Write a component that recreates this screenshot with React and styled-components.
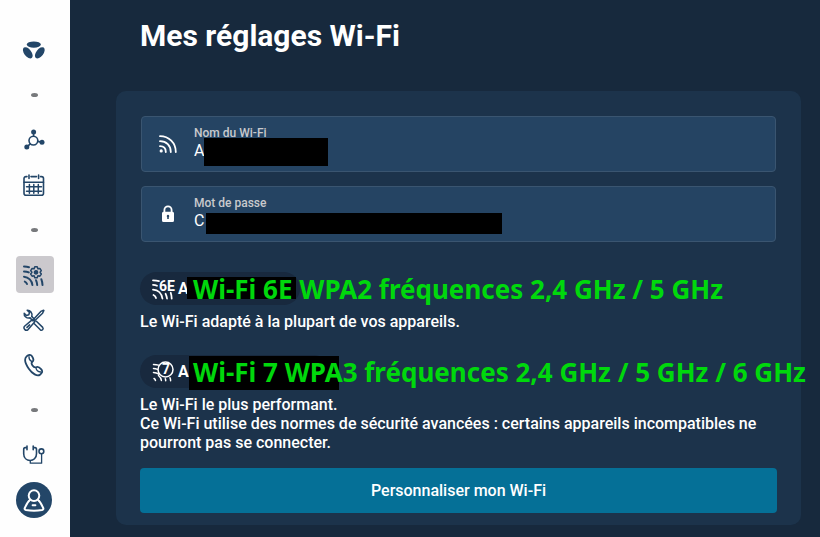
import React, { useState } from 'react';
import styled, { createGlobalStyle } from 'styled-components';

const GlobalStyle = createGlobalStyle`
  * {
    box-sizing: border-box;
  }

  body {
    margin: 0;
    background: #17293d;
    color: #fff;
    font-family: Roboto, 'Liberation Sans', sans-serif;
    font-size: 16px;
    line-height: 19px;
  }
`;

// Styled components
const Page = styled.div`
  display: flex;
  min-height: 100vh;
`;

const Sidebar = styled.nav`
  flex: none;
  width: 70px;
  padding: 31px 16px 0;
  background: #fefefe;
`;

const NavList = styled.ul`
  display: flex;
  flex-direction: column;
  gap: 8px;
  margin: 0;
  padding: 0;
  list-style: none;
`;

const NavLink = styled.a`
  display: flex;
  align-items: center;
  justify-content: center;
  height: 37px;
  padding-right: 2px;
  border-radius: 4px;
  background: ${({ $active }) => ($active ? '#cbc9cd' : 'transparent')};
  color: #234668;
`;

const Separator = styled.li`
  display: flex;
  align-items: center;
  justify-content: center;
  height: 37px;
  padding-right: 2px;

  &::before {
    content: '';
    width: 7px;
    height: 4px;
    border-radius: 50%;
    background: #77797c;
  }
`;

const Avatar = styled.span`
  display: flex;
  flex: none;
  align-items: center;
  justify-content: center;
  width: 36px;
  height: 36px;
  border-radius: 50%;
  background: #234668;
  color: #fff;
`;

const Icon = styled.svg`
  display: block;
  flex: none;
  fill: none;
  stroke: currentColor;
  stroke-width: ${({ $weight }) => $weight || 1.6};
  stroke-linecap: round;
  stroke-linejoin: round;
`;

const Main = styled.main`
  flex: 1;
  min-width: 0;
  padding: 18px 19px 12px 46px;
`;

const Title = styled.h1`
  margin: 0 24px 37px;
  font-size: 30px;
  font-weight: 700;
  line-height: 36px;
`;

const Card = styled.section`
  padding: 25px 24px 12px;
  border-radius: 10px;
  background: #1c334b;
`;

const Fields = styled.div`
  display: grid;
  gap: 14px;
  margin: 0 1px 30px;
`;

const Field = styled.div`
  position: relative;
  display: flex;
  align-items: center;
  gap: 17px;
  height: 56px;
  padding: 0 17px;
  border: 1px solid #3a5570;
  border-radius: 4px;
  background: #254463;
`;

const FieldText = styled.div`
  display: flex;
  flex: 1;
  flex-direction: column;
  padding-bottom: 4px;
`;

const Label = styled.label`
  color: #c9cacd;
  font-size: 12px;
  font-weight: 500;
  line-height: 16px;
`;

const Input = styled.input`
  width: 100%;
  height: 18px;
  padding: 0;
  border: 0;
  outline: 0;
  background: transparent;
  color: #fff;
  font: inherit;
`;

const Mask = styled.span`
  position: absolute;
  top: ${({ $top }) => $top}px;
  left: ${({ $left }) => $left}px;
  width: ${({ $width }) => $width}px;
  height: ${({ $height }) => $height}px;
  background: #000;
`;

const Networks = styled.div`
  display: grid;
  gap: 24px;
  margin-bottom: 16px;
`;

const Network = styled.article`
  position: relative;
`;

const Pill = styled.div`
  display: flex;
  align-items: center;
  gap: 2px;
  width: ${({ $width }) => $width}px;
  height: 33px;
  margin-bottom: 7px;
  padding-left: 12px;
  border-radius: 17px;
  background: #18293e;
  font-weight: 700;
`;

const Note = styled.strong`
  position: absolute;
  top: 0;
  left: 53px;
  color: #00d80c;
  font-family: 'Noto Sans', sans-serif;
  font-size: 26px;
  font-weight: 700;
  line-height: 34px;
  white-space: nowrap;
`;

const Description = styled.p`
  margin: 0;
  font-weight: 500;
`;

const Button = styled.button`
  display: block;
  width: 100%;
  height: 45px;
  border: 0;
  border-radius: 4px;
  background: #057097;
  color: #fff;
  font: inherit;
  font-weight: 500;
  cursor: pointer;
`;

// Icons
const LogoIcon = () => (
  <Icon width="24" height="24" viewBox="0 0 24 24" aria-hidden="true">
    <g fill="currentColor" stroke="none">
      <ellipse cx="11.8" cy="6.6" rx="7" ry="3.2" />
      <ellipse cx="5.8" cy="14.8" rx="6.5" ry="3.6" transform="rotate(53 5.8 14.8)" />
      <ellipse cx="17.8" cy="14.8" rx="6.5" ry="3.6" transform="rotate(-53 17.8 14.8)" />
    </g>
  </Icon>
);

const NetworkIcon = () => (
  <Icon width="24" height="24" viewBox="0 0 24 24" aria-hidden="true">
    <circle cx="11.4" cy="12.6" r="4.4" />
    <path d="M11.6 8V4M15.8 13.4l4 .9M8.2 15.8 5 18.8" />
    <g fill="currentColor" stroke="none">
      <circle cx="11.6" cy="4" r="2.5" />
      <circle cx="20" cy="14.3" r="2.5" />
      <circle cx="4.8" cy="19" r="2.5" />
    </g>
  </Icon>
);

const CalendarIcon = () => (
  <Icon width="24" height="24" viewBox="0 0 24 24" aria-hidden="true">
    <path d="M5 3.6H4a2 2 0 0 0-2 2v14.6a2 2 0 0 0 2 2h15.5a2 2 0 0 0 2-2V5.6a2 2 0 0 0-2-2h-1M9 3.6h5.5" />
    <path d="M7 2v3.4M16.6 2v3.4M2 9.2h19.5" />
    <path d="M7.4 11.5v8.8M11.8 11.5v8.800M16.3 11.5v8.8M4.5 13.7h15M4.5 18.2h15" strokeWidth="1.5" />
  </Icon>
);

const WifiGearIcon = () => (
  <Icon $weight={2} width="24" height="24" viewBox="0 0 24 24" aria-hidden="true">
    <path d="M2 3.6q3 0 5 .6M2 8.400q2.800 0 4.800 1M2 13.700c4.600.4 8 4 8.400 8.300M2.800 18.600q1.600.6 2.200 2.400M14 17.200q.9 2 1.200 4.800M19.300 16.200q1 2.600 1.200 5.800" />
    <path
      d="M12.800 3.800h2.400l.7 2 2-.4 1.400 2.200-1.200 1.700 1.200 1.700-1.400 2.200-2-.4-.7 2h-2.400l-.7-2-2 .4-1.400-2.200 1.200-1.700-1.200-1.700 1.400-2.200 2 .4z"
      strokeWidth="1.5"
    />
    <circle cx="14" cy="9.300" r="1.700" strokeWidth="1.3" fill="currentColor" />
  </Icon>
);

const ToolsIcon = () => (
  <Icon $weight={1.5} width="24" height="24" viewBox="0 0 24 24" aria-hidden="true">
    <path d="M9.800 8.500C10.800 5 8.200 2 5.200 2.200l2.300 2.300-.7 2.300-2.300.7L2.200 5.300C1.800 8.300 4.600 10.700 8 9.900" />
    <path d="M9.800 8.500l2.600 2.600M8 9.900l2.700 2.700M14.400 13.200l6.300 6.200c1.300 1.600-.8 3.700-2.400 2.400l-6-6.100" />
    <path d="M11.600 11.300 18.800 3.400l2.800-1.200.3.300-1.300 2.700-7.900 7.500" />
    <path d="M10.400 11.600 2.800 18c-2.200 2.200.8 5.600 3.300 3.600l6.900-8zM5 19.400l2.600-2.500" />
  </Icon>
);

const PhoneIcon = () => (
  <Icon $weight={1.800} width="24" height="24" viewBox="0 0 24 24" aria-hidden="true">
    <path d="M4.600 3.400C6.300 1.900 8.600 1.200 10 3.200c1.500 2.200 2.100 4.200.4 5.500-1.600 1.200-1 2.300.1 3.900 1.200 1.700 2.200 2.300 3.600 1.600 2.100-1 3.600.3 5.200 2.200 1.900 2.300.3 4.100-1.300 5.300-2.700 2-7.700-.9-11.200-6C3.500 11 2.100 5.800 4.600 3.400z" />
    <path d="M7 3.600q-.3 3.200 2.600 4.800M14 14.800q.5 3.600 4.600 4.200" strokeWidth="1.300" />
  </Icon>
);

const StethoscopeIcon = () => (
  <Icon width="24" height="24" viewBox="0 0 24 24" aria-hidden="true">
    <path d="M5 4.600H3.200Q1.700 4.600 1.700 6.500v4.200c0 9 12.800 9 12.800 0V6.500q0-1.900-1.500-1.900h-1.800M5 3v3.800M11.200 3v3.800" />
    <circle cx="19.400" cy="8.300" r="2.400" />
    <path d="M19.600 11v9.200H8.300v-2.600" strokeWidth="1.300" />
  </Icon>
);

const AccountIcon = () => (
  <Icon $weight={2} width="24" height="24" viewBox="0 0 24 24" aria-hidden="true">
    <circle cx="12" cy="7.600" r="5.300" />
    <path d="M8.200 11.800C5.300 14 4.300 16.500 2.800 20q-.7 1.600 1.200 2c5 .9 11 .9 16 0q1.900-.4 1.200-2c-1.500-3.500-2.500-6-5.400-8.200" />
    <path d="M10.600 17.300h2.800" />
  </Icon>
);

const SignalIcon = () => (
  <Icon $weight={1.8} width="18" height="18" viewBox="0 0 18 18" aria-hidden="true">
    <path d="M1 1.200C10 1.200 16.800 8 16.800 17M1 6.200C7.400 6.200 11.800 10.600 11.800 17M1 11.200c3.600 0 5.800 2.200 5.800 5.800" />
    <circle cx="2.200" cy="15.900" r=".7" fill="currentColor" />
  </Icon>
);

const LockIcon = () => (
  <Icon width="18" height="18" viewBox="0 0 18 18" aria-hidden="true">
    <path d="M5.400 8V5a3.600 3.600 0 0 1 7.200 0v3" strokeWidth="1.800" />
    <path fill="currentColor" stroke="none" fillRule="evenodd" d="M4.500 6.800h9a1.500 1.500 0 0 1 1.500 1.500v7.200a1.500 1.500 0 0 1-1.500 1.500h-9A1.500 1.500 0 0 1 3 15.500V8.300a1.500 1.500 0 0 1 1.500-1.500zM9 9.800a1.300 1.300 0 0 0-.8 2.300v1.900h1.600v-1.900A1.300 1.300 0 0 0 9 9.800z" />
  </Icon>
);

const BadgeText = styled.text`
  fill: currentColor;
  stroke: none;
  font-size: 14px;
  font-weight: 700;
`;

const Wifi6Icon = () => (
  <Icon $weight={1.8} width="24" height="24" viewBox="0 0 24 24" aria-hidden="true">
    <path d="M1 3.300q3.500 0 6 .8M1 7.800q2.300 0 4 .9M1 12.600c5.300.3 8.800 4 9.400 8.900M1.500 18q2 .9 2.500 3M13.600 16.800q1.100 2.200 1.400 4.700M18.700 15.800q.9 2.600 1 5.700" />
    <BadgeText x="7" y="14">6E</BadgeText>
  </Icon>
);

const Wifi7Icon = () => (
  <Icon $weight={1.5} width="24" height="24" viewBox="0 0 24 24" aria-hidden="true">
    <circle cx="13.500" cy="9.500" r="7.500" />
    <path d="M1.500 4.500q3 0 5 .6M1.500 8.500q2 0 4 .9M1.500 12.500q3 .2 5.400 1.700M2 18.500q1.200.6 1.500 2M6.500 15.500q2.600 2.200 2.900 5M13.300 18.800q.4 1 .4 1.900M18 17.800q.6 1.500.6 2.900" />
    <BadgeText x="10" y="14">7</BadgeText>
  </Icon>
);

const App = () => {
    const [name, setName] = useState('A');
    const [password, setPassword] = useState('C');

    return (
        <Page>
            <GlobalStyle />
            <Sidebar>
                <NavList>
                    <li><NavLink href="#accueil"><LogoIcon /></NavLink></li>
                    <Separator />
                    <li><NavLink href="#reseau"><NetworkIcon /></NavLink></li>
                    <li><NavLink href="#planning"><CalendarIcon /></NavLink></li>
                    <Separator />
                    <li><NavLink href="#wifi" $active><WifiGearIcon /></NavLink></li>
                    <li><NavLink href="#outils"><ToolsIcon /></NavLink></li>
                    <li><NavLink href="#telephone"><PhoneIcon /></NavLink></li>
                    <Separator />
                    <li><NavLink href="#diagnostic"><StethoscopeIcon /></NavLink></li>
                    <li><NavLink href="#compte"><Avatar><AccountIcon /></Avatar></NavLink></li>
                </NavList>
            </Sidebar>

            <Main>
                <Title>Mes réglages Wi-Fi</Title>
                <Card>
                    <Fields>
                        <Field>
                            <SignalIcon />
                            <FieldText>
                                <Label htmlFor="wifi-name">Nom du Wi-Fi</Label>
                                <Input id="wifi-name" value={name} onChange={(e) => setName(e.target.value)} />
                            </FieldText>
                            <Mask $top={21} $left={62} $width={124} $height={28} />
                        </Field>
                        <Field>
                            <LockIcon />
                            <FieldText>
                                <Label htmlFor="wifi-password">Mot de passe</Label>
                                <Input id="wifi-password" value={password} onChange={(e) => setPassword(e.target.value)} />
                            </FieldText>
                            <Mask $top={26} $left={64} $width={296} $height={21} />
                        </Field>
                    </Fields>

                    <Networks>
                        <Network>
                            <Pill $width={160}><Wifi6Icon />A</Pill>
                            <Mask $top={5} $left={47} $width={109} $height={22} />
                            <Note>Wi-Fi 6E WPA2 fréquences 2,4 GHz / 5 GHz</Note>
                            <Description>Le Wi-Fi adapté à la plupart de vos appareils.</Description>
                        </Network>
                        <Network>
                            <Pill $width={190}><Wifi7Icon />A</Pill>
                            <Mask $top={1} $left={49} $width={150} $height={34} />
                            <Note>Wi-Fi 7 WPA3 fréquences 2,4 GHz / 5 GHz / 6 GHz</Note>
                            <Description>
                                Le Wi-Fi le plus performant.
                                <br />
                                Ce Wi-Fi utilise des normes de sécurité avancées : certains appareils incompatibles ne
                                pourront pas se connecter.
                            </Description>
                        </Network>
                    </Networks>

                    <Button type="button">Personnaliser mon Wi-Fi</Button>
                </Card>
            </Main>
        </Page>
    );
};

export default App;
